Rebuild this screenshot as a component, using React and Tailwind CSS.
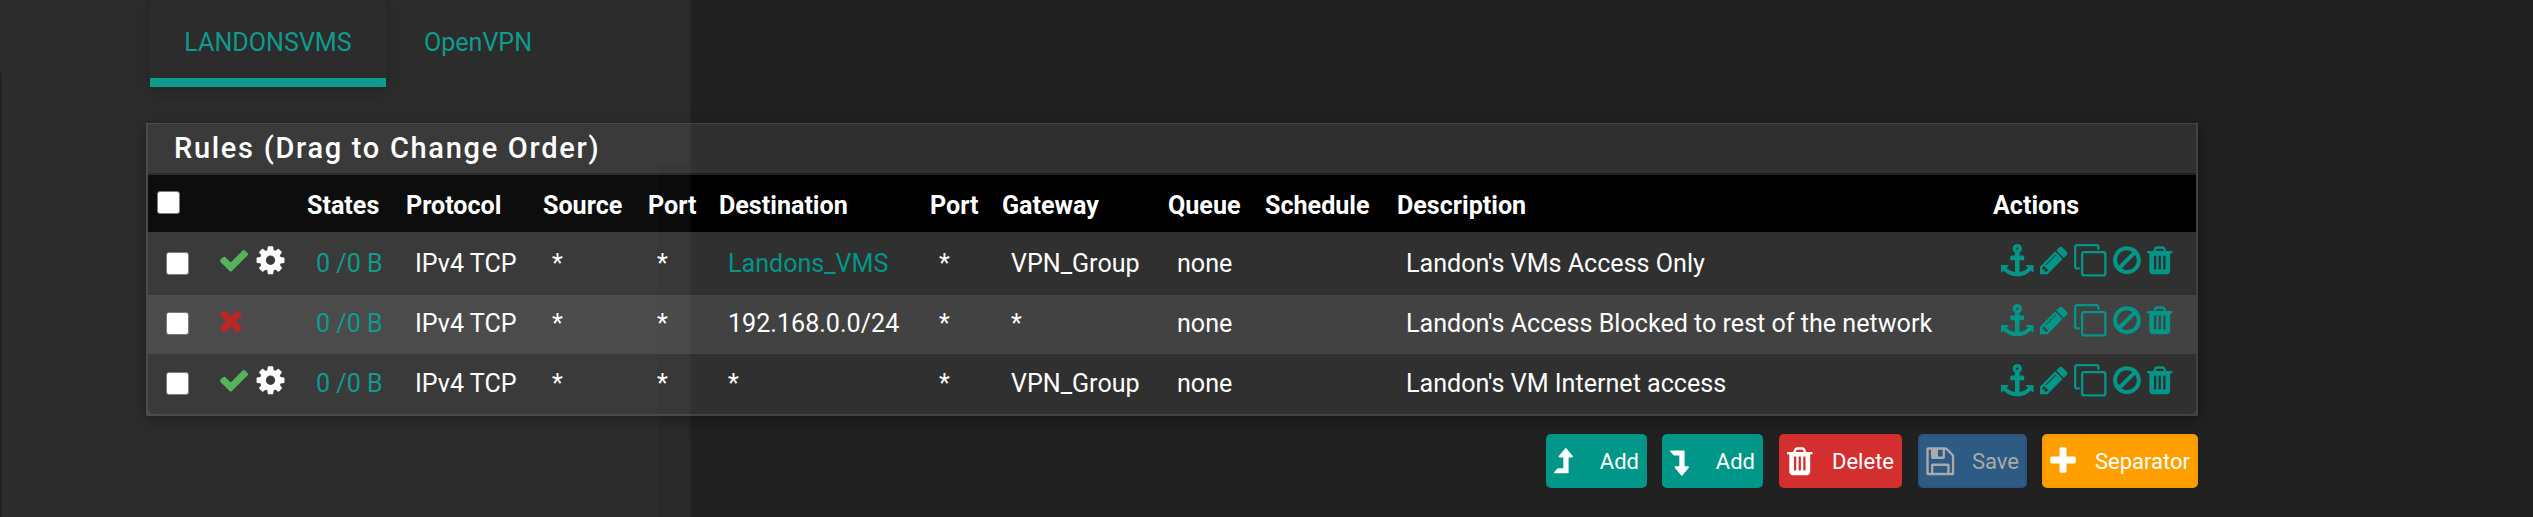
import React from 'react';
import clsx from 'clsx';

// Icon outlines, each with its own view box so glyphs keep their natural advance
const ICONS = {
  check: {
    box: '121 0 1550 1792',
    width: 28,
    d: 'M1671 566q0 40-28 68l-724 724-136 136q-28 28-68 28t-68-28l-136-136-362-362q-28-28-28-68t28-68l136-136q28-28 68-28t68 28l294 295 656-657q28-28 68-28t68 28l136 136q28 28 28 68z',
  },
  times: {
    box: '302 0 1188 1792',
    width: 22,
    d: 'M1490 1322q0 40-28 68l-136 136q-28 28-68 28t-68-28l-294-294-294 294q-28 28-68 28t-68-28l-136-136q-28-28-28-68t28-68l294-294-294-294q-28-28-28-68t28-68l136-136q28-28 68-28t68 28l294 294 294-294q28-28 68-28t68 28l136 136q28 28 28 68t-28 68l-294 294 294 294q28 28 28 68z',
  },
  cog: {
    box: '128 0 1536 1792',
    width: 29,
    d: 'M1152 896q0-106-75-181t-181-75-181 75-75 181 75 181 181 75 181-75 75-181zm512-109v222q0 12-8 23t-20 13l-185 28q-19 54-39 91 35 50 107 138 10 12 10 25t-9 23q-27 37-99 108t-94 71q-12 0-26-9l-138-108q-44 23-91 38-16 136-29 186-7 28-36 28h-222q-14 0-24.5-8.5t-11.5-21.5l-28-184q-49-16-90-37l-141 107q-10 9-25 9-14 0-25-11-126-114-165-168-7-10-7-23 0-12 8-23 15-21 51-66.5t54-70.5q-27-50-41-99l-183-27q-13-2-21-12.5t-8-23.5v-222q0-12 8-23t19-13l186-28q14-46 39-92-40-57-107-138-10-12-10-24 0-10 9-23 26-36 98.5-107.5t94.5-71.5q13 0 26 10l138 107q44-23 91-38 16-136 29-186 7-28 36-28h222q14 0 24.5 8.5t11.5 21.5l28 184q49 16 90 37l142-107q9-9 24-9 13 0 25 10 129 119 165 170 7 8 7 22 0 12-8 23-15 21-51 66.5t-54 70.5q26 50 41 98l183 28q13 2 21 12.5t8 23.5z',
  },
  anchor: {
    box: '0 0 1792 1792',
    width: 32.5,
    d: 'M960 256q0-26-19-45t-45-19-45 19-19 45 19 45 45 19 45-19 19-45zm832 928v352q0 22-20 30-8 2-12 2-13 0-23-9l-93-93q-119 143-318.5 226.5t-429.5 83.5-429.5-83.5-318.5-226.5l-93 93q-9 9-23 9-4 0-12-2-20-8-20-30v-352q0-14 9-23t23-9h352q22 0 30 20 8 19-7 35l-100 100q67 91 189.5 153.5t271.5 82.5v-647h-192q-26 0-45-19t-19-45v-128q0-26 19-45t45-19h192v-163q-58-34-93-92.5t-35-128.5q0-106 75-181t181-75 181 75 75 181q0 70-35 128.5t-93 92.5v163h192q26 0 45 19t19 45v128q0 26-19 45t-45 19h-192v647q149-20 271.5-82.5t189.5-153.5l-100-100q-15-16-7-35 8-20 30-20h352q14 0 23 9t9 23z',
  },
  pencil: {
    box: '128 0 1536 1792',
    width: 27.9,
    d: 'M491 1536l91-91-235-235-91 91v107h128v128h107zm523-928q0-22-22-22-10 0-17 7l-542 542q-7 7-7 17 0 22 22 22 10 0 17-7l542-542q7-7 7-17zm-54-192l416 416-832 832h-416v-416zm683 96q0 53-37 90l-166 166-416-416 166-165q36-38 90-38 53 0 91 38l235 234q37 39 37 91z',
  },
  clone: {
    box: '0 0 1792 1792',
    width: 32.5,
    d: 'M1664 1632v-1088q0-13-9.5-22.5t-22.5-9.5h-1088q-13 0-22.5 9.5t-9.5 22.5v1088q0 13 9.5 22.5t22.5 9.5h1088q13 0 22.5-9.5t9.5-22.5zm128-1088v1088q0 66-47 113t-113 47h-1088q-66 0-113-47t-47-113v-1088q0-66 47-113t113-47h1088q66 0 113 47t47 113zm-384-384v160h-128v-160q0-13-9.5-22.5t-22.5-9.5h-1088q-13 0-22.5 9.5t-9.5 22.5v1088q0 13 9.5 22.5t22.5 9.5h160v128h-160q-66 0-113-47t-47-113v-1088q0-66 47-113t113-47h1088q66 0 113 47t47 113z',
  },
  ban: {
    box: '128 0 1536 1792',
    width: 27.9,
    d: 'M1440 893q0-161-87-295l-754 753q137 89 297 89 111 0 211.5-43.5t173.5-116.5 116-174.5 43-212.5zm-999 299l755-754q-135-91-300-91-148 0-273 73t-198 199-73 274q0 162 89 299zm1223-299q0 157-61 300t-163.5 246-245 164-298.5 61-298.5-61-245-164-163.5-246-61-300 61-299.5 163.5-245.5 245-164 298.5-61 298.5 61 245 164 163.5 245.5 61 299.5z',
  },
  trash: {
    box: '192 0 1408 1792',
    width: 25.5,
    d: 'M704 1376v-704q0-14-9-23t-23-9h-64q-14 0-23 9t-9 23v704q0 14 9 23t23 9h64q14 0 23-9t9-23zm256 0v-704q0-14-9-23t-23-9h-64q-14 0-23 9t-9 23v704q0 14 9 23t23 9h64q14 0 23-9t9-23zm256 0v-704q0-14-9-23t-23-9h-64q-14 0-23 9t-9 23v704q0 14 9 23t23 9h64q14 0 23-9t9-23zm-544-992h448l-48-117q-7-9-17-11h-317q-10 2-17 11zm928 32v64q0 14-9 23t-23 9h-96v948q0 83-47 143.5t-113 60.5h-832q-66 0-113-58.5t-47-141.5v-952h-96q-14 0-23-9t-9-23v-64q0-14 9-23t23-9h309l70-167q15-37 54-63t79-26h320q40 0 79 26t54 63l70 167h309q14 0 23 9t9 23z',
  },
  save: {
    box: '128 0 1536 1792',
    width: 28.6,
    d: 'M512 1536h768v-384h-768v384zm896 0h128v-896q0-14-10-38.5t-20-34.5l-281-281q-10-10-34-20t-39-10v416q0 40-28 68t-68 28h-576q-40 0-68-28t-28-68v-416h-128v1280h128v-416q0-40 28-68t68-28h832q40 0 68 28t28 68v416zm-384-928v-320q0-13-9.5-22.5t-22.5-9.5h-192q-13 0-22.5 9.5t-9.5 22.5v320q0 13 9.5 22.5t22.5 9.5h192q13 0 22.5-9.5t9.5-22.5zm640 32v928q0 40-28 68t-68 28h-1344q-40 0-68-28t-28-68v-1344q0-40 28-68t68-28h928q40 0 88 20t76 48l280 280q28 28 48 76t20 88z',
  },
  plus: {
    box: '192 0 1408 1792',
    width: 26,
    d: 'M1600 736v192q0 40-28 68t-68 28h-416v416q0 40-28 68t-68 28h-192q-40 0-68-28t-28-68v-416h-416q-40 0-68-28t-28-68v-192q0-40 28-68t68-28h416v-416q0-40 28-68t68-28h192q40 0 68 28t28 68v416h416q40 0 68 28t28 68z',
  },
  levelUp: {
    box: '0 0 19 32.5',
    width: 19,
    d: 'M12.3 3.2L18.8 10.9Q19.3 12.4 17.8 12.4H14.6V27.6Q14.6 28.2 14 28.2H.6Q-.3 28 .2 27.3L3.4 23.6Q3.6 23.3 4 23.3H9.3V12.4H5.6Q4.2 12.2 4.8 10.9L11.3 3.2Q11.8 2.7 12.3 3.2Z',
  },
  levelDown: {
    box: '0 0 19 32.5',
    width: 19,
    d: 'M12.3 30.5L18.8 22.8Q19.3 21.3 17.8 21.3H14.6V6.1Q14.6 5.5 14 5.5H.6Q-.3 5.7 .2 6.4L3.4 10.1Q3.6 10.4 4 10.4H9.3V21.3H5.6Q4.2 21.5 4.8 22.8L11.3 30.5Q11.8 31 12.3 30.5Z',
  },
};

const Icon = ({ name, className }) => {
  const icon = ICONS[name];
  return (
    <svg
      viewBox={icon.box}
      width={icon.width}
      height="32.5"
      fill="currentColor"
      className={clsx('shrink-0', className)}
    >
      <path d={icon.d} />
    </svg>
  );
};

const Checkbox = () => (
  <input
    type="checkbox"
    className="block size-[23px] appearance-none rounded-[3px] border border-[#767676] bg-white"
  />
);

const columns = [
  { label: '', width: 'w-[85px]' },
  { label: 'States', width: 'w-[99px]' },
  { label: 'Protocol', width: 'w-[137px]' },
  { label: 'Source', width: 'w-[105px]' },
  { label: 'Port', width: 'w-[71px]' },
  { label: 'Destination', width: 'w-[211px]' },
  { label: 'Port', width: 'w-[72px]' },
  { label: 'Gateway', width: 'w-[166px]' },
  { label: 'Queue', width: 'w-[97px]' },
  { label: 'Schedule', width: 'w-[132px]' },
  { label: 'Description', width: 'w-[596px]' },
  { label: 'Actions', width: 'w-[212px]' },
];

const rules = [
  {
    pass: true,
    destination: 'Landons_VMS',
    alias: true,
    gateway: 'VPN_Group',
    description: "Landon's VMs Access Only",
    row: 'h-[63px] pt-[12px]',
  },
  {
    pass: false,
    destination: '192.168.0.0/24',
    gateway: '*',
    description: "Landon's Access Blocked to rest of the network",
    row: 'h-[59px] pt-[9px] bg-[#424242]',
  },
  {
    pass: true,
    destination: '*',
    gateway: 'VPN_Group',
    description: "Landon's VM Internet access",
    row: 'h-[60px] pt-[10px] rounded-b-[6px]',
  },
];

const actions = ['anchor', 'pencil', 'clone', 'ban', 'trash'];

const Cell = ({ width, className, children }) => (
  <div className={clsx('shrink-0 pt-[2px] pl-[19px] leading-[36px] whitespace-nowrap', width, className)}>
    {children}
  </div>
);

const RuleRow = ({ rule }) => (
  <div className={clsx('flex items-start', rule.row)}>
    <div className="w-[64px] shrink-0 pt-[8px] pl-[18px]">
      <Checkbox />
    </div>
    <div className="flex w-[85px] shrink-0 gap-[8px] pl-[8px]">
      <Icon name={rule.pass ? 'check' : 'times'} className={rule.pass ? 'text-[#4caf50]' : 'text-[#b71c1c]'} />
      {rule.pass && <Icon name="cog" />}
    </div>
    <Cell width={columns[1].width} className="text-[#009688]">0 /0 B</Cell>
    <Cell width={columns[2].width}>IPv4 TCP</Cell>
    <Cell width={columns[3].width}>*</Cell>
    <Cell width={columns[4].width}>*</Cell>
    <Cell width={columns[5].width} className={rule.alias && 'text-[#009688]'}>{rule.destination}</Cell>
    <Cell width={columns[6].width}>*</Cell>
    <Cell width={columns[7].width}>{rule.gateway}</Cell>
    <Cell width={columns[8].width}>none</Cell>
    <Cell width={columns[9].width} />
    <Cell width={columns[10].width}>{rule.description}</Cell>
    <div className="flex w-[212px] shrink-0 gap-[6.3px] pl-[18.3px] text-[#009688]">
      {actions.map((name) => (
        <Icon key={name} name={name} />
      ))}
    </div>
  </div>
);

const buttons = [
  { icon: 'levelUp', label: 'Add', style: 'w-[101px] bg-[#009688]' },
  { icon: 'levelDown', label: 'Add', style: 'ml-[15px] w-[101px] bg-[#009688]' },
  { icon: 'trash', label: 'Delete', style: 'ml-[16px] w-[123px] bg-[#d32f2f]' },
  { icon: 'save', label: 'Save', style: 'ml-[16px] w-[109px] border-2 border-[#29557e] bg-[#2d5b84] text-[#aaaaaa]' },
  { icon: 'plus', label: 'Separator', style: 'ml-[15px] w-[156px] border-2 border-[#fb9700] bg-[#ffa000]' },
];

export default function App() {
  return (
    <div className="relative h-[517px] w-[2533px] overflow-hidden bg-[#212121] font-[Roboto,sans-serif] text-[25.1px] text-white">
      {/* Interface tabs */}
      <div className="flex h-[87px] pl-[150px] leading-[86px] text-[#009688]">
        <div className="w-[236px] border-b-[9px] border-[#009688] text-center shadow-[0_4px_16px_rgba(0,0,0,0.3)]">
          LANDONSVMS
        </div>
        <div className="w-[184px] text-center">OpenVPN</div>
      </div>

      {/* Rules panel */}
      <div className="mt-[36px] ml-[146px] w-[2052px] border-x-2 border-t border-b-2 border-[#424242] bg-[#424242] shadow-[0_4px_16px_rgba(0,0,0,0.4)]">
        <h2 className="h-[51px] border-b-2 border-[#212121] bg-[#303030] pl-[26px] text-[29px] leading-[48px] font-medium tracking-[1.7px]">
          Rules (Drag to Change Order)
        </h2>
        <div className="flex h-[57px] bg-black font-bold">
          <div className="w-[64px] shrink-0 pt-[16px] pl-[9px]">
            <Checkbox />
          </div>
          {columns.map((col, i) => (
            <div key={i} className={clsx('shrink-0 pl-[10px] leading-[62px]', col.width)}>
              {col.label}
            </div>
          ))}
        </div>
        <div className="rounded-b-[6px] bg-[#303030]">
          {rules.map((rule) => (
            <RuleRow key={rule.description} rule={rule} />
          ))}
        </div>
      </div>

      {/* Footer buttons */}
      <div className="mt-[18px] flex w-[2198px] justify-end text-[22px]">
        {buttons.map((btn, i) => (
          <button
            key={i}
            className={clsx('flex h-[54px] items-center justify-between rounded-[5px]', btn.style, btn.style.includes('border') ? 'px-[6px]' : 'px-[8px]')}
          >
            <Icon name={btn.icon} />
            <span>{btn.label}</span>
          </button>
        ))}
      </div>

      {/* Translucent highlight across the left of the page */}
      <div className="pointer-events-none absolute inset-y-0 left-0 flex w-[693px]">
        <div className="h-[73px] w-[2px] bg-white/5" />
        <div className="w-[656px] bg-white/5" />
        <div className="flex w-[32px] flex-col">
          <div className="h-[164px] bg-white/5" />
          <div className="grow bg-white/[0.045]" />
        </div>
        <div className="w-[3px] bg-white/1" />
      </div>
    </div>
  );
}
